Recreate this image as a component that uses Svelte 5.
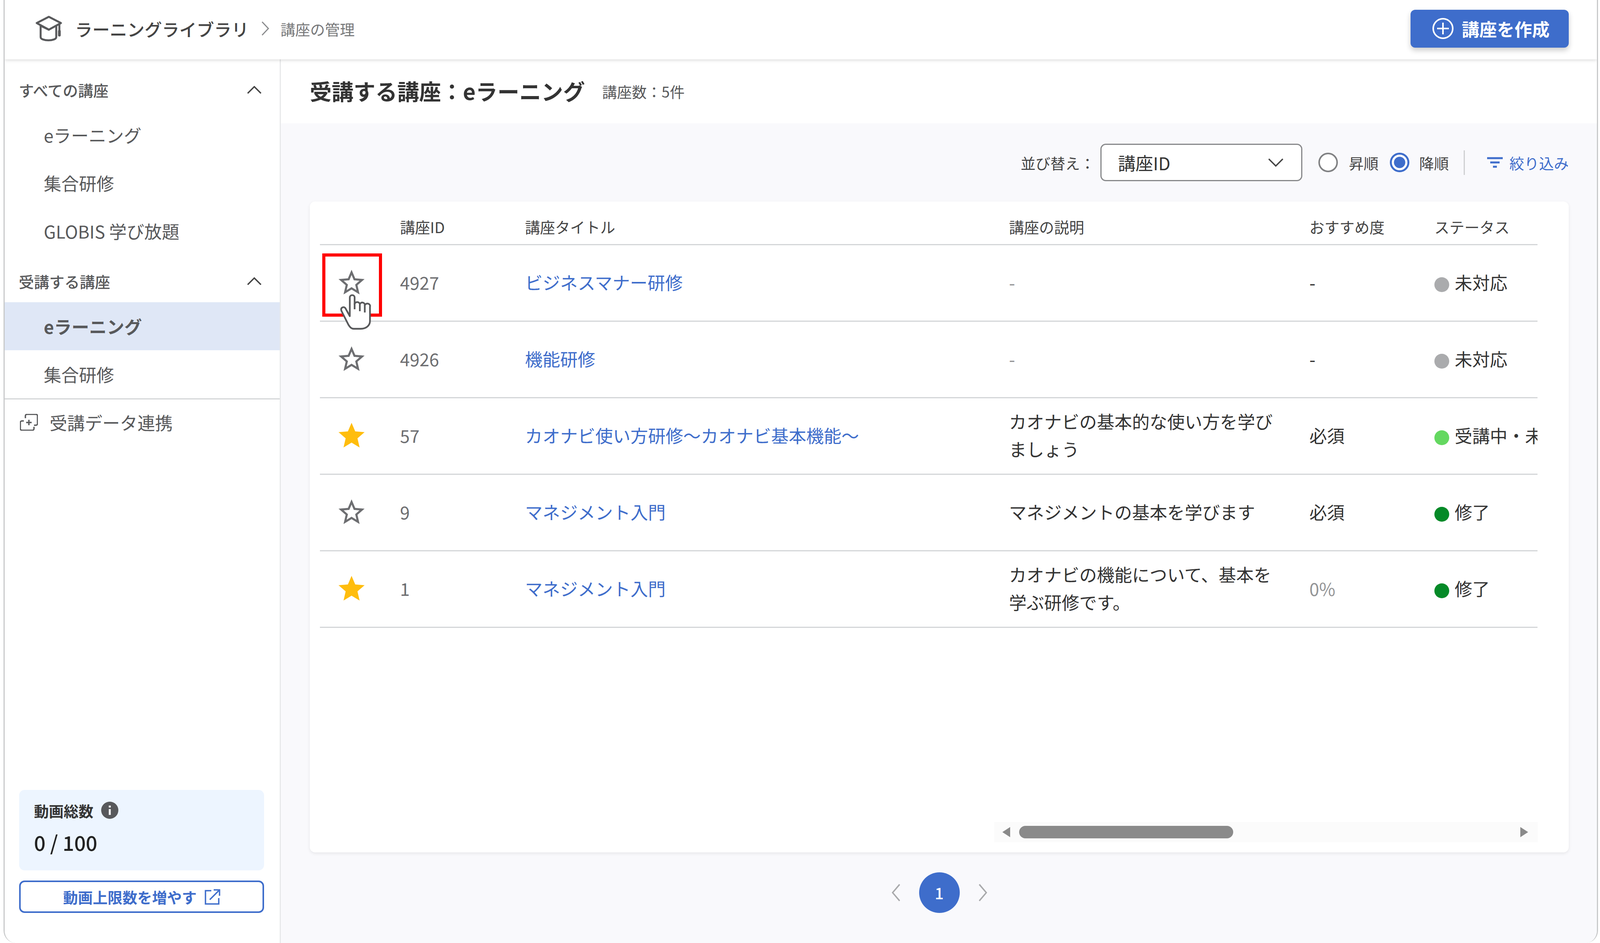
<script>
	const allCourses = ["eラーニング", "集合研修", "GLOBIS 学び放題"];
	const myCourses = [
		{ label: "eラーニング", active: true },
		{ label: "集合研修", active: false }
	];
	const starPath = "M12 17.27 18.18 21l-1.64-7.03L22 9.24l-7.19-.61L12 2 9.19 8.63 2 9.24l5.46 4.73L5.82 21z";
	const starBorder = "M22 9.24l-7.19-.62L12 2 9.19 8.63 2 9.24l5.46 4.73L5.82 21 12 17.27 18.18 21l-1.63-7.03L22 9.24zM12 15.4l-3.76 2.27 1-4.28-3.32-2.88 4.38-.38L12 6.1l1.71 4.04 4.38.38-3.32 2.88 1 4.28L12 15.4z";
	const rows = [
		{ id: "4927", title: "ビジネスマナー研修", desc: "-", rec: "-", status: "未対応", dot: "none", fav: false },
		{ id: "4926", title: "機能研修", desc: "-", rec: "-", status: "未対応", dot: "none", fav: false },
		{ id: "57", title: "カオナビ使い方研修〜カオナビ基本機能〜", desc: "カオナビの基本的な使い方を学びましょう", rec: "必須", status: "受講中・未修了", dot: "doing", fav: true },
		{ id: "9", title: "マネジメント入門", desc: "マネジメントの基本を学びます", rec: "必須", status: "修了", dot: "done", fav: false },
		{ id: "1", title: "マネジメント入門", desc: "カオナビの機能について、基本を学ぶ研修です。", rec: "0%", status: "修了", dot: "done", fav: true }
	];
</script>

<div class="frame">
	<header class="topbar">
		<div class="crumbs">
			<svg class="cap" viewBox="0 0 68 66" width="68" height="66" fill="none" stroke="#58595b" stroke-width="5" stroke-linejoin="round" stroke-linecap="round">
				<path d="M34 3 3 19l31 17 31-17z" />
				<path d="M13 26v29c0 11 40 11 40 0V27" />
				<path d="M34 36 13 26" />
				<path d="M61 22v22" />
				<path d="M61 40v10" stroke-width="7" />
			</svg>
			<span class="app-name">ラーニングライブラリ</span>
			<svg class="crumb-sep" viewBox="0 0 20 38" width="20" height="38" fill="none" stroke="#8a8b8d" stroke-width="3"><path d="M2 2 18 19 2 36" /></svg>
			<span class="crumb">講座の管理</span>
		</div>
		<button class="create">
			<svg viewBox="0 0 54 56" width="54" height="56" fill="none" stroke="#fff" stroke-width="4"><circle cx="27" cy="28" r="25" /><path d="M27 13v30M12 28h30" /></svg>
			<span>講座を作成</span>
		</button>
	</header>

	<div class="body">
		<aside class="sidebar">
			<div class="nav">
				<div class="nav-head">
					<span>すべての講座</span>
					<svg viewBox="0 0 36 20" width="36" height="20" fill="none" stroke="#444" stroke-width="3.5"><path d="M1 19 18 2l17 17" /></svg>
				</div>
				{#each allCourses as item}
					<div class="nav-item">{item}</div>
				{/each}
				<div class="nav-head second">
					<span>受講する講座</span>
					<svg viewBox="0 0 36 20" width="36" height="20" fill="none" stroke="#444" stroke-width="3.5"><path d="M1 19 18 2l17 17" /></svg>
				</div>
				{#each myCourses as item}
					<div class="nav-item" class:active={item.active}>{item.label}</div>
				{/each}
				<div class="nav-link">
					<svg viewBox="0 0 46 43" width="46" height="43" fill="none" stroke="#58595b" stroke-width="3.5">
						<path d="M14 11V5a4 4 0 0 1 4-4h23a4 4 0 0 1 4 4v20a4 4 0 0 1-4 4h-5" />
						<path d="M10 18H5a4 4 0 0 0-4 4v16a4 4 0 0 0 4 4h27a4 4 0 0 0 4-4v-5" />
						<path d="M23 15v14M16 22h14" />
					</svg>
					<span>受講データ連携</span>
				</div>
			</div>

			<div class="quota">
				<div class="quota-box">
					<div class="quota-label">
						<span>動画総数</span>
						<svg viewBox="0 0 44 44" width="44" height="44"><circle cx="22" cy="22" r="22" fill="#58595b" /><rect x="19.5" y="19" width="5" height="15" fill="#fff" /><rect x="19.5" y="10" width="5" height="5" fill="#fff" /></svg>
					</div>
					<div class="quota-value">0 / 100</div>
				</div>
				<button class="quota-btn">
					<span>動画上限数を増やす</span>
					<svg viewBox="0 0 40 40" width="40" height="40" fill="none" stroke="#3e6dcb" stroke-width="3.5"><path d="M17 4H2v34h34V23" /><path d="M13 27 36 4" /><path d="M23 2h15v15" /></svg>
				</button>
			</div>
		</aside>

		<main class="main">
			<div class="title-band">
				<h1>受講する講座：eラーニング</h1>
				<span class="count">講座数：5件</span>
			</div>

			<div class="content">
				<div class="toolbar">
					<span class="sort-label">並び替え：</span>
					<div class="select">
						<span>講座ID</span>
						<svg viewBox="0 0 38 22" width="38" height="22" fill="none" stroke="#444" stroke-width="3.5"><path d="M1 2l18 18L37 2" /></svg>
					</div>
					<span class="radio first"></span>
					<span class="radio-label">昇順</span>
					<span class="radio on"></span>
					<span class="radio-label">降順</span>
					<span class="tool-sep"></span>
					<svg class="filter" viewBox="0 0 40 28" width="40" height="28" fill="none" stroke="#3e6dcb" stroke-width="5"><path d="M0 3h40M8 14h24M15 25h10" /></svg>
					<span class="filter-label">絞り込み</span>
				</div>

				<section class="card">
					<div class="table-wrap">
						<table>
							<colgroup>
								<col style="width: 205px" />
								<col style="width: 320px" />
								<col />
								<col style="width: 769px" />
								<col style="width: 320px" />
								<col style="width: 600px" />
							</colgroup>
							<thead>
								<tr>
									<th></th>
									<th>講座ID</th>
									<th>講座タイトル</th>
									<th>講座の説明</th>
									<th>おすすめ度</th>
									<th>ステータス</th>
								</tr>
							</thead>
							<tbody>
								{#each rows as row}
									<tr>
										<td class="fav">
											<svg viewBox="0 0 24 24" width="80" height="80">
												{#if row.fav}
													<path d={starPath} fill="#ffbd0d" />
												{:else}
													<path d={starBorder} fill="#6d6e71" />
												{/if}
											</svg>
										</td>
										<td class="num">{row.id}</td>
										<td><span class="link">{row.title}</span></td>
										<td class="desc" class:empty={row.desc === "-"}>{row.desc}</td>
										<td class="rec" class:pct={row.rec === "0%"}>{row.rec}</td>
										<td class="status"><span class="dot {row.dot}"></span>{row.status}</td>
									</tr>
								{/each}
							</tbody>
						</table>
					</div>

					<div class="scrollbar">
						<svg viewBox="0 0 20 26" width="20" height="26"><path d="M20 0v26L0 13z" fill="#8a8a8a" /></svg>
						<span class="thumb"></span>
						<svg class="right" viewBox="0 0 20 26" width="20" height="26"><path d="M0 0v26l20-13z" fill="#8a8a8a" /></svg>
					</div>

					<div class="mark"></div>
					<svg class="hand" viewBox="260 395 260 285" width="87" height="95">
						<path d="M345 568V425a18 18 0 0 1 37 0v53a20 18 0 0 1 40 0 19 18 0 0 1 38 7 20 18 0 0 1 40 10v110c0 35-30 60-70 60h-55c-20 0-30-15-40-30l-53-105c-12-25 13-40 28-25z" fill="#fff" stroke="#58595b" stroke-width="13" stroke-linejoin="round" />
						<path d="M382 470v45M422 475v55M460 482v58" fill="none" stroke="#58595b" stroke-width="13" />
					</svg>
				</section>

				<nav class="pager">
					<svg viewBox="0 0 22 46" width="22" height="46" fill="none" stroke="#a8a9ab" stroke-width="3.5"><path d="M20 2 2 23l18 21" /></svg>
					<span class="page">1</span>
					<svg viewBox="0 0 22 46" width="22" height="46" fill="none" stroke="#a8a9ab" stroke-width="3.5"><path d="M2 2l18 21L2 44" /></svg>
				</nav>
			</div>
		</main>
	</div>
</div>

<style>
	:global(body) {
		margin: 0;
		background: #fff;
	}
	.frame {
		box-sizing: border-box;
		height: 2415px;
		margin: 0 5px 0 9px;
		display: flex;
		flex-direction: column;
		overflow: hidden;
		background: #fff;
		border-left: 3px solid #c9cacb;
		border-right: 3px solid #c9cacb;
		border-radius: 0 0 32px 32px;
		font-family: "Noto Sans CJK JP", "Noto Sans", sans-serif;
		font-size: 45px;
		color: #333;
	}
	button {
		font-family: inherit;
		cursor: pointer;
	}

	/* top bar */
	.topbar {
		flex: none;
		height: 152px;
		box-sizing: border-box;
		display: flex;
		align-items: center;
		justify-content: space-between;
		padding: 0 72px 6px 79px;
		position: relative;
		z-index: 2;
		background: #fff;
		box-shadow: 0 3px 8px rgba(0, 0, 0, 0.13);
	}
	.crumbs {
		display: flex;
		align-items: center;
	}
	.cap {
		margin-right: 33px;
	}
	.app-name {
		font-weight: 500;
		color: #444;
		font-size: 44.5px;
	}
	.crumb-sep {
		margin: 0 29px 0 32px;
	}
	.crumb {
		font-size: 38px;
		color: #77787a;
	}
	.create {
		display: flex;
		align-items: center;
		gap: 21px;
		width: 405px;
		height: 97px;
		padding: 0 0 0 56px;
		border: 0;
		border-radius: 12px;
		background: #3e6dcb;
		color: #fff;
		font-size: 45px;
		font-weight: 700;
		box-shadow: 0 7px 14px rgba(0, 0, 0, 0.2);
	}

	.body {
		flex: 1;
		min-height: 0;
		display: flex;
	}

	/* sidebar */
	.sidebar {
		flex: none;
		width: 704px;
		display: flex;
		flex-direction: column;
		justify-content: space-between;
		border-right: 3px solid #e8e9ea;
		padding-top: 24px;
		background: #fff;
	}
	.nav-head {
		height: 108px;
		display: flex;
		align-items: center;
		justify-content: space-between;
		padding: 0 47px 0 36px;
		font-size: 39px;
		font-weight: 500;
		color: #58595b;
	}
	.nav-head.second {
		margin-top: 13px;
	}
	.nav-item {
		height: 123px;
		display: flex;
		align-items: center;
		padding-left: 100px;
		color: #58595b;
	}
	.nav-item.active {
		background: #dfe7f6;
		font-weight: 700;
	}
	.nav-link {
		height: 116px;
		display: flex;
		align-items: center;
		gap: 30px;
		padding-left: 39px;
		border-top: 3px solid #d4d6d8;
		color: #58595b;
	}
	.quota {
		padding: 0 40px 77px 37px;
	}
	.quota-box {
		box-sizing: border-box;
		height: 206px;
		padding: 27px 38px 0;
		background: #edf5ff;
		border-radius: 14px;
	}
	.quota-label {
		display: flex;
		align-items: center;
		gap: 20px;
		height: 50px;
		font-size: 38px;
		font-weight: 700;
		color: #333;
	}
	.quota-value {
		margin-top: 22px;
		font-size: 52px;
		line-height: 70px;
		font-weight: 500;
		color: #222;
	}
	.quota-btn {
		box-sizing: border-box;
		width: 100%;
		height: 83px;
		margin-top: 26px;
		display: flex;
		align-items: center;
		justify-content: center;
		gap: 20px;
		background: #fff;
		border: 4px solid #3e6dcb;
		border-radius: 14px;
		color: #3e6dcb;
		font-size: 38px;
		font-weight: 700;
	}

	/* main */
	.main {
		flex: 1;
		min-width: 0;
		display: flex;
		flex-direction: column;
	}
	.title-band {
		flex: none;
		height: 164px;
		box-sizing: border-box;
		display: flex;
		align-items: center;
		gap: 44px;
		padding: 0 0 6px 74px;
		background: #fff;
	}
	h1 {
		margin: 0;
		font-size: 56px;
		font-weight: 700;
		color: #333;
	}
	.count {
		margin-top: 4px;
		font-size: 38px;
		color: #58595b;
	}
	.content {
		flex: 1;
		min-height: 0;
		display: flex;
		flex-direction: column;
		padding: 52px 72px 0 74px;
		background: #f9f9fc;
	}
	.toolbar {
		flex: none;
		height: 96px;
		display: flex;
		align-items: center;
		justify-content: flex-end;
		font-size: 38px;
		color: #444;
	}
	.sort-label {
		margin-right: 14px;
	}
	.select {
		box-sizing: border-box;
		width: 517px;
		height: 96px;
		display: flex;
		align-items: center;
		justify-content: space-between;
		padding: 0 46px 0 42px;
		background: #fff;
		border: 3px solid #87888a;
		border-radius: 14px;
		font-size: 45px;
		color: #333;
	}
	.radio {
		box-sizing: border-box;
		width: 50px;
		height: 50px;
		margin-right: 28px;
		border: 4px solid #808183;
		border-radius: 50%;
		background: #fff;
	}
	.radio.first {
		margin-left: 41px;
	}
	.radio.on {
		margin-left: 29px;
		margin-right: 25px;
		border: 5px solid #3e6dcb;
		background: radial-gradient(circle, #3e6dcb 0 14px, #fff 15px);
	}
	.tool-sep {
		width: 3px;
		height: 63px;
		margin: 0 57px 0 38px;
		background: #cfd0d2;
	}
	.filter {
		margin-right: 17px;
	}
	.filter-label {
		color: #3e6dcb;
	}

	.card {
		flex: none;
		position: relative;
		box-sizing: border-box;
		height: 1667px;
		margin-top: 52px;
		padding: 0 80px 26px 26px;
		display: flex;
		flex-direction: column;
		background: #fff;
		border-radius: 14px;
		box-shadow: 0 3px 8px rgba(0, 0, 0, 0.08);
	}
	.table-wrap {
		flex: 1;
		min-height: 0;
		overflow: hidden;
	}
	table {
		table-layout: fixed;
		/* wider than the card: the status column runs under the scroll edge */
		width: calc(100% + 336px);
		border-collapse: collapse;
	}
	th {
		height: 110px;
		box-sizing: border-box;
		padding: 20px 0 0;
		text-align: left;
		font-size: 38.5px;
		font-weight: 400;
		color: #444;
		border-bottom: 3px solid #d4d6d8;
	}
	td {
		height: 196px;
		box-sizing: border-box;
		padding: 0 0 4px;
		line-height: 71px;
		color: #333;
		border-bottom: 3px solid #d4d6d8;
	}
	td svg {
		display: block;
	}
	.fav {
		padding: 0 0 0 41px;
	}
	.num {
		color: #6d6e71;
	}
	.link {
		color: #3e6dcb;
	}
	.desc {
		padding-right: 60px;
	}
	.desc.empty,
	.rec.pct {
		color: #939496;
	}
	.status {
		white-space: nowrap;
	}
	.dot {
		display: inline-block;
		width: 38px;
		height: 38px;
		margin-right: 14px;
		border-radius: 50%;
		vertical-align: -6px;
	}
	.dot.none {
		background: #aaabad;
	}
	.dot.doing {
		background: #64d860;
	}
	.dot.done {
		background: #058a28;
	}

	.scrollbar {
		flex: none;
		align-self: flex-end;
		box-sizing: border-box;
		width: 1392px;
		height: 52px;
		margin-right: -1px;
		display: flex;
		align-items: center;
		padding: 0 25px 0 21px;
		background: #fbfbfb;
	}
	.thumb {
		width: 548px;
		height: 32px;
		margin-left: 23px;
		border-radius: 16px;
		background: #8a8a8a;
	}
	.scrollbar .right {
		margin-left: auto;
	}

	/* annotation drawn over the screenshot */
	.mark {
		position: absolute;
		left: 32px;
		top: 133px;
		width: 153px;
		height: 162px;
		box-sizing: border-box;
		border: 8px solid #f00;
	}
	.hand {
		position: absolute;
		left: 74px;
		top: 236px;
	}

	.pager {
		flex: none;
		margin-top: 51px;
		display: flex;
		align-items: center;
		justify-content: center;
		gap: 48px;
	}
	.page {
		width: 104px;
		height: 104px;
		display: flex;
		align-items: center;
		justify-content: center;
		border-radius: 50%;
		background: #3e6dcb;
		color: #fff;
		font-size: 40px;
		font-weight: 500;
	}
</style>
